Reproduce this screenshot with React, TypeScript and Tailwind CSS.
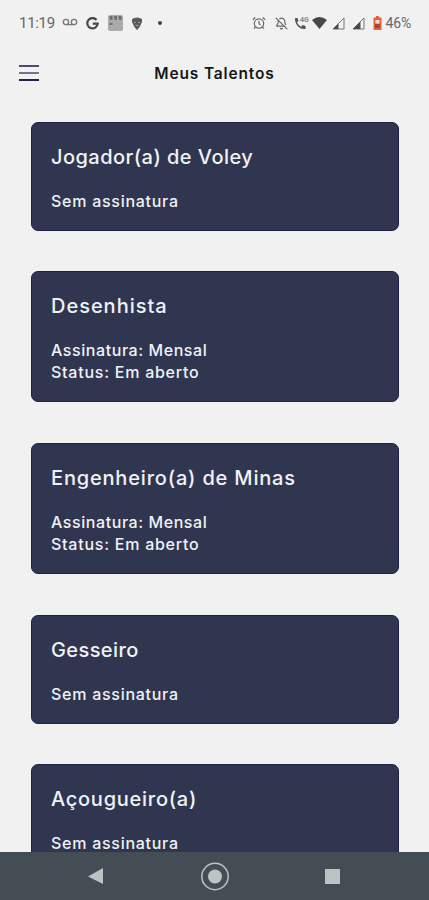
import { AlarmClock, BellOff, Voicemail } from "lucide-react";

type Line = {
  text: string;
  className: string;
};

type Talent = {
  name: string;
  nameClass: string;
  lines: Line[];
};

const noPlan: Line = { text: "Sem assinatura", className: "tracking-[0.73px]" };
const monthly: Line = { text: "Assinatura: Mensal", className: "tracking-[0.57px]" };
const open: Line = { text: "Status: Em aberto", className: "tracking-[0.75px]" };

const talents: Talent[] = [
  { name: "Jogador(a) de Voley", nameClass: "tracking-[0.46px]", lines: [noPlan] },
  { name: "Desenhista", nameClass: "tracking-[0.98px]", lines: [monthly, open] },
  { name: "Engenheiro(a) de Minas", nameClass: "tracking-[0.82px]", lines: [monthly, open] },
  { name: "Gesseiro", nameClass: "tracking-[0.4px]", lines: [noPlan] },
  { name: "Açougueiro(a)", nameClass: "tracking-[0.74px]", lines: [noPlan] },
];

const SignalIcon = ({ fill }: { fill: string }) => (
  <svg width="13" height="13" viewBox="0 0 13 13">
    <path d="M1 12 12 1v11z" fill="none" stroke="#777" strokeWidth="1" />
    <path d={fill} fill="#4a4a4a" />
  </svg>
);

const StatusBar = () => (
  <div className="flex h-[46px] shrink-0 items-center pl-[19px] pr-[18px] font-[Roboto,sans-serif] text-[#666]">
    <span className="w-[43px] text-[15px] tracking-[-0.3px]">11:19</span>
    <Voicemail size={16} strokeWidth={2} className="mt-[-2px] text-[#777]" />
    <svg width="13" height="13" viewBox="0 0 13 13" className="ml-[8px]">
      <path
        d="M10.6 3A5.2 5.2 0 1 0 11.7 6.7H6.8"
        fill="none"
        stroke="#484848"
        strokeWidth="2.2"
      />
    </svg>
    <svg width="15" height="16" viewBox="0 0 15 16" className="ml-[9px]">
      <rect width="15" height="16" rx="2" fill="#aaa" />
      <path
        d="M1.5 2h3M6 2h3M10.5 2h3M2 4h2.5M6.5 4h2.5M11 4h2.5M1.5 9h3"
        stroke="#5c5c5c"
        strokeWidth="1.6"
      />
    </svg>
    <svg width="12" height="13" viewBox="0 0 12 13" className="ml-[8px]">
      <path d="M1 2q5-3 10 0v3l-1 2-1 2.500-2 2.500-1 1-1-1-2-2.500-1-2.500-1-2z" fill="#5a5a5a" />
      <path d="M3 5.500h1.700M7.300 5.500H9M4.500 8.500h3" stroke="#aaa" />
    </svg>
    <span className="ml-[15px] size-[4px] rounded-full bg-[#444]" />

    <div className="ml-auto flex items-center">
      <AlarmClock size={14} strokeWidth={2} />
      <BellOff size={13} strokeWidth={2.2} className="ml-[9px]" />
      <svg width="16" height="14" viewBox="0 0 16 14" className="ml-[6px]">
        <path
          d="M1 2h2.500l1 3-1.500 1.500q1.500 3 4 4.200L8.500 9l3 1v3Q7 13.500 4 10.500T1 2z"
          fill="#555"
        />
        <text x="6" y="6" fontSize="7" fontWeight="700" fill="#888">
          4G
        </text>
      </svg>
      <svg width="15" height="12" viewBox="0 0 15 12" className="ml-[2px]">
        <path d="M0 3q7.500-6 15 0L7.500 12z" fill="#484848" />
      </svg>
      <div className="ml-[5px] flex gap-[7px]">
        <SignalIcon fill="M1 12 6.500 6.500V12z" />
        <SignalIcon fill="M1 12 8.500 4.500V12z" />
      </div>
      <svg width="9" height="14" viewBox="0 0 9 14" className="ml-[8px]">
        <path d="M3 0h3v1.500h2.500V14h-8V1.500H3z" fill="#e5623f" />
        <path d="M2.500 4h4v3.500h-4z" fill="#f7d8cf" />
        <path d="M2 8h5v4H2z" fill="#a8492f" />
      </svg>
      <span className="ml-[4px] text-[14px] leading-none tracking-[-0.2px]">46%</span>
    </div>
  </div>
);

const Header = () => (
  <header className="grid h-[54px] shrink-0 grid-cols-[1fr_auto_1fr] items-center">
    <button aria-label="Menu" className="ml-[19px] flex w-[20px] flex-col gap-[5px]">
      <span className="h-[2px] bg-[#4b4d69]" />
      <span className="h-[2px] bg-[#73758a]" />
      <span className="h-[2px] bg-[#25224a]" />
    </button>
    <h1 className="mt-[2px] text-[15.5px] font-semibold leading-5 tracking-[0.85px] text-[#161616]">
      Meus Talentos
    </h1>
  </header>
);

const TalentCard = ({ name, nameClass, lines }: Talent) => (
  <article className="shrink-0 rounded-[7px] border border-[#1d2148] bg-[#30364f] px-[19px] pb-[18px] pt-[21px] text-[#f1f2f7]">
    <h2 className={`mb-[20px] text-[20px] font-medium leading-[26px] ${nameClass}`}>
      {name}
    </h2>
    {lines.map(({ text, className }) => (
      <p key={text} className={`text-[16px] font-medium leading-[22px] ${className}`}>
        {text}
      </p>
    ))}
  </article>
);

const NavBar = () => (
  <nav className="flex h-[48px] shrink-0 items-center bg-[#454d54] text-[#bbc3c3]">
    <svg width="429" height="48" viewBox="0 0 429 48" fill="currentColor">
      <path d="M88 24.500 103 16v16z" />
      <circle cx="215" cy="24.500" r="13.200" fill="none" stroke="currentColor" strokeWidth="1.500" />
      <circle cx="215" cy="24.500" r="7" />
      <rect x="325" y="17" width="15" height="15" />
    </svg>
  </nav>
);

export default function App() {
  return (
    <div className="flex h-[900px] w-[429px] flex-col overflow-hidden bg-[#f1f1f1] font-[Inter,sans-serif]">
      <StatusBar />
      <Header />
      <main className="flex min-h-0 flex-1 flex-col gap-[40.7px] overflow-hidden pl-[31px] pr-[30px] pt-[21.5px]">
        {talents.map((talent) => (
          <TalentCard key={talent.name} {...talent} />
        ))}
      </main>
      <NavBar />
    </div>
  );
}
